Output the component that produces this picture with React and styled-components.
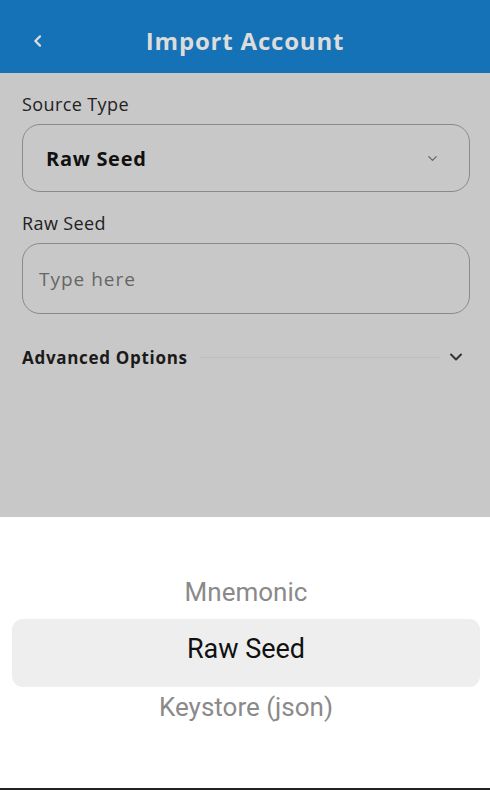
import React from 'react';
import styled, { createGlobalStyle } from 'styled-components';

const GlobalStyle = createGlobalStyle`
	html, body {
		margin: 0;
		padding: 0;
		background: #ffffff;
	}
	* {
		box-sizing: border-box;
	}
`;

const Page = styled.div`
	width: 490px;
	height: 790px;
	display: flex;
	flex-direction: column;
	font-family: "Open Sans", Lato, sans-serif;
	overflow: hidden;
`;

const Header = styled.header`
	height: 73px;
	flex-shrink: 0;
	background-color: #1572b6;
	display: grid;
	grid-template-columns: 60px 1fr 60px;
	align-items: center;
	padding-top: 8px;
`;

const BackButton = styled.button`
	background: none;
	border: none;
	padding: 0 0 0 30px;
	display: flex;
	align-items: center;
	color: #dcdcdc;
`;

const Title = styled.h1`
	margin: 0;
	text-align: center;
	font-size: 24px;
	line-height: 30px;
	font-weight: 700;
	letter-spacing: 0.8px;
	color: #dcdcdc;
`;

const Body = styled.main`
	flex: 1;
	background-color: #c8c8c8;
	padding: 21px 20px 0 22px;
	display: flex;
	flex-direction: column;
`;

const Label = styled.label`
	font-size: 18px;
	line-height: 20px;
	letter-spacing: 0.4px;
	color: #222222;
	margin-bottom: 10px;
`;

const Field = styled.div`
	height: ${props => props.height}px;
	border: 1px solid #8a8a8a;
	border-radius: 18px;
	display: flex;
	align-items: center;
	justify-content: space-between;
	padding: 0 29px 0 ${props => props.padLeft}px;
	margin-bottom: 21px;
`;

const FieldValue = styled.span`
	font-size: 20px;
	font-weight: 700;
	letter-spacing: 0.7px;
	color: #111111;
`;

const Placeholder = styled.span`
	font-size: 19px;
	letter-spacing: 1px;
	color: #666666;
`;

const AdvancedRow = styled.div`
	display: flex;
	align-items: center;
	height: 20px;
	margin-top: 12px;
	padding-right: 4px;
`;

const AdvancedTitle = styled.span`
	font-size: 17px;
	font-weight: 700;
	letter-spacing: 0.7px;
	color: #1a1a1a;
	white-space: nowrap;
`;

const Rule = styled.div`
	flex: 1;
	height: 1px;
	background-color: #bebebe;
	margin: 0 6px 0 12px;
`;

const Sheet = styled.section`
	height: 271px;
	flex-shrink: 0;
	background-color: #ffffff;
	display: flex;
	flex-direction: column;
	align-items: stretch;
	padding: 55px 10px 0 12px;
	font-family: Roboto, "Liberation Sans", sans-serif;
`;

const Option = styled.div`
	height: ${props => (props.selected ? 68 : 40)}px;
	display: flex;
	align-items: center;
	justify-content: center;
	border-radius: 11px;
	background-color: ${props => (props.selected ? '#eeeeee' : 'transparent')};
	color: ${props => (props.selected ? '#111111' : '#8a8a8a')};
	font-size: ${props => (props.selected ? 27 : 26)}px;
	margin-top: ${props => (props.selected ? 7 : 0)}px;
	padding-bottom: ${props => (props.selected ? 9 : 0)}px;
`;

const BottomBar = styled.div`
	height: 2px;
	flex-shrink: 0;
	background-color: #222222;
`;

const Chevron = ({ size, width, color }) => (
	<svg width={size} height={size} viewBox="0 0 24 24" fill="none" stroke={color} strokeWidth={width} strokeLinecap="round" strokeLinejoin="round">
		<polyline points="6 9 12 15 18 9" />
	</svg>
);

const App = () => {
	return (
		<Page>
			<GlobalStyle />
			<Header>
				<BackButton>
					<svg width="16" height="16" viewBox="0 0 24 24" fill="none" stroke="#dcdcdc" strokeWidth="3.4" strokeLinecap="round" strokeLinejoin="round">
						<polyline points="15 5 8 12 15 19" />
					</svg>
				</BackButton>
				<Title>Import Account</Title>
				<div />
			</Header>
			<Body>
				<Label>Source Type</Label>
				<Field height={68} padLeft={23}>
					<FieldValue>Raw Seed</FieldValue>
					<Chevron size={15} width={2} color="#666666" />
				</Field>
				<Label>Raw Seed</Label>
				<Field height={71} padLeft={16}>
					<Placeholder>Type here</Placeholder>
				</Field>
				<AdvancedRow>
					<AdvancedTitle>Advanced Options</AdvancedTitle>
					<Rule />
					<Chevron size={20} width={2.4} color="#333333" />
				</AdvancedRow>
			</Body>
			<Sheet>
				<Option>Mnemonic</Option>
				<Option selected>Raw Seed</Option>
				<Option>Keystore (json)</Option>
			</Sheet>
			<BottomBar />
		</Page>
	);
};

export default App;
